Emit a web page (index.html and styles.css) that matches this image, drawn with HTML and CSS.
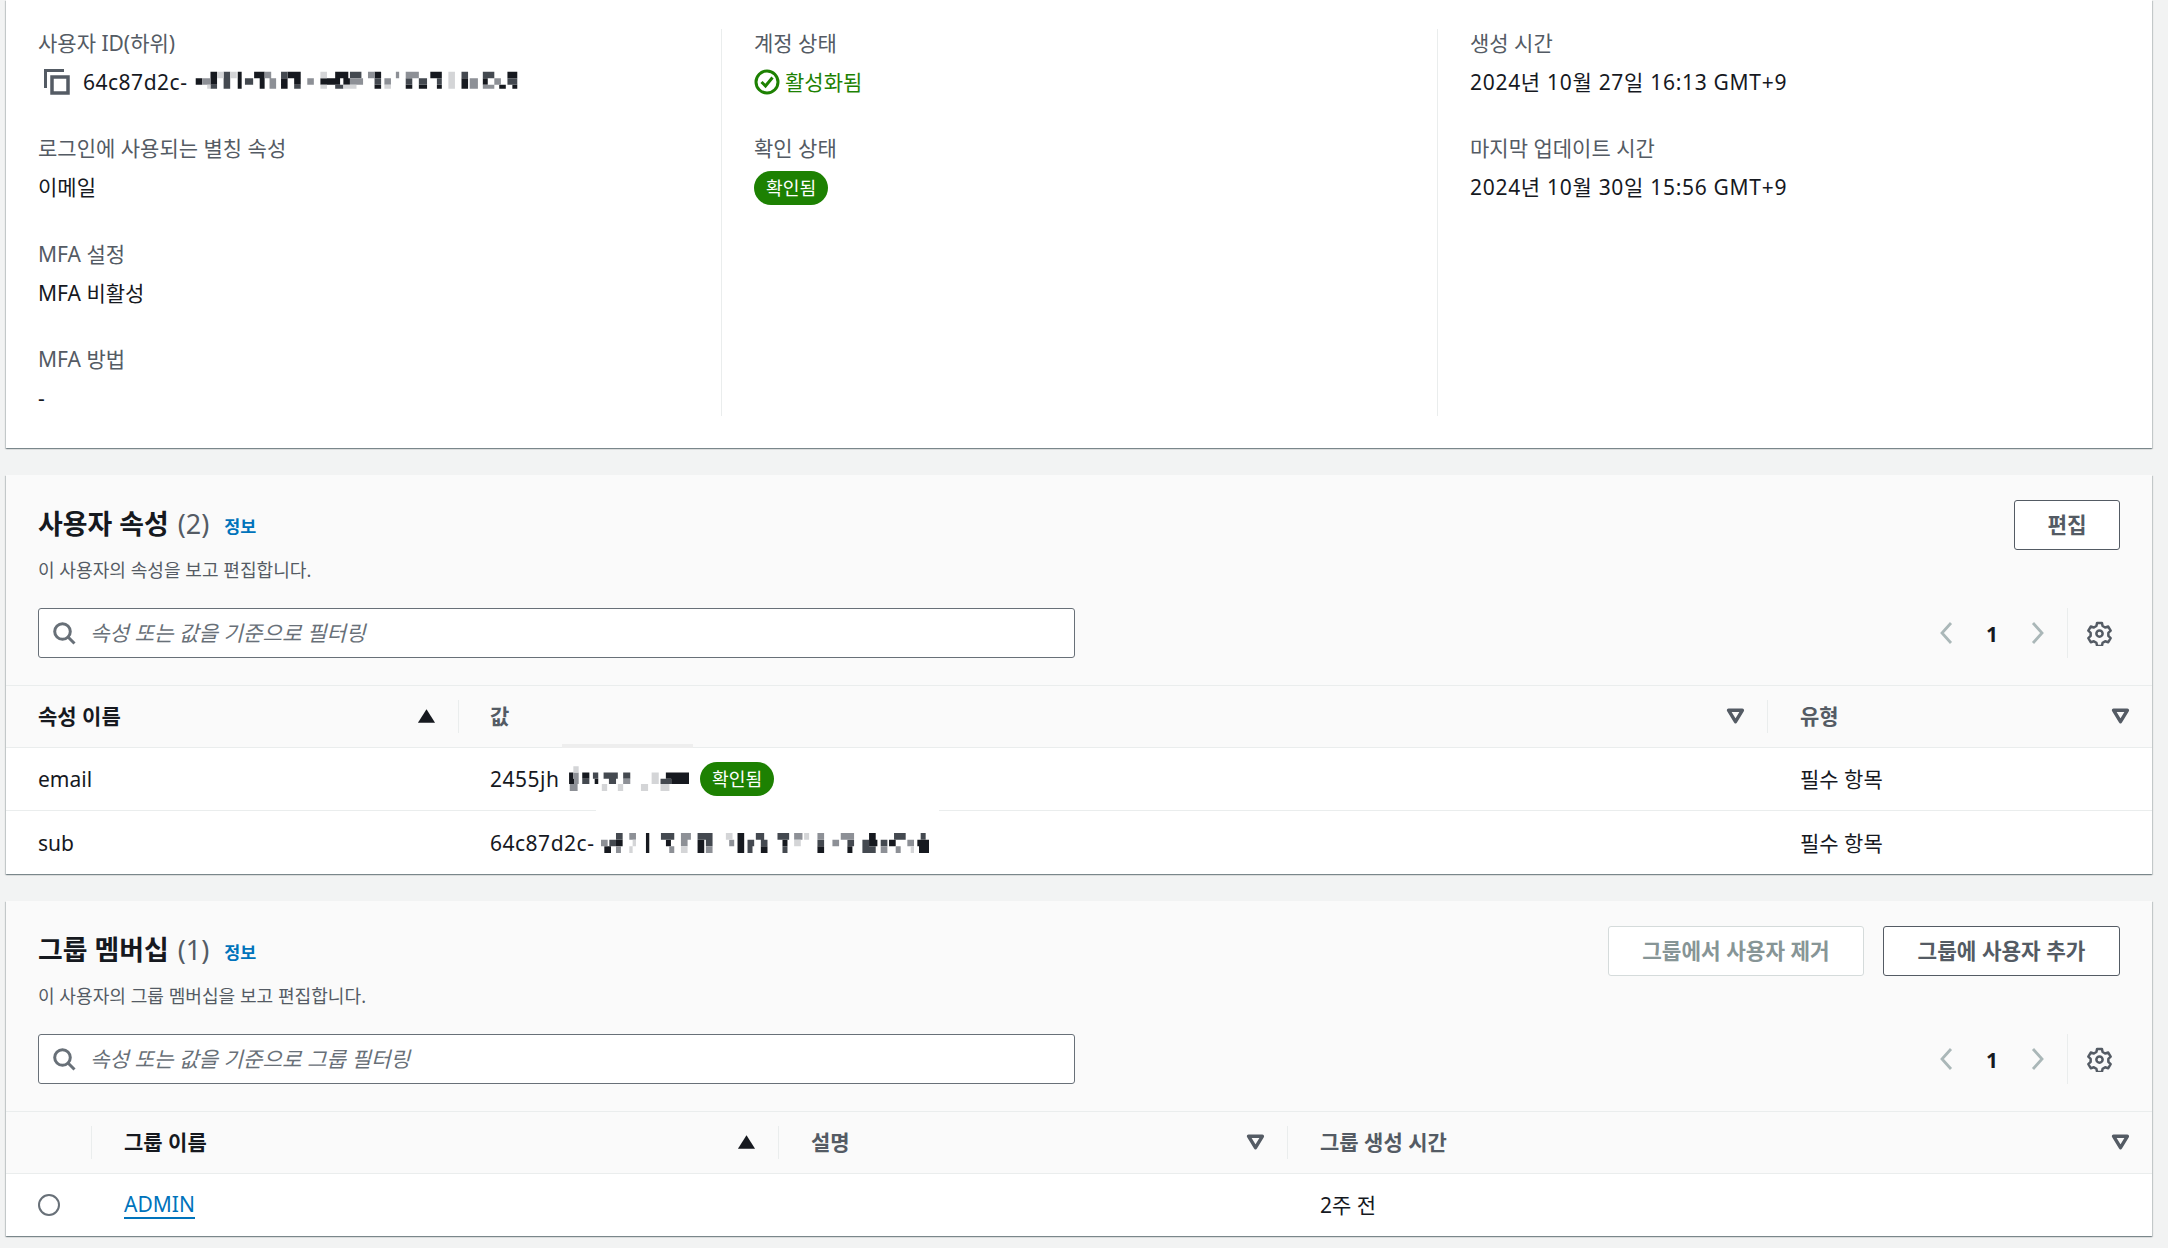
FILE: index.html
```html
<!DOCTYPE html>
<html lang="ko">
<head>
<meta charset="utf-8">
<title>사용자 세부 정보</title>
<link rel="stylesheet" href="styles.css">
</head>
<body>
<svg class="defs" aria-hidden="true">
  <symbol id="i-search" viewBox="0 0 24 24"><circle cx="10.500" cy="10.500" r="7.800" fill="none" stroke="currentColor" stroke-width="3"/><path d="M16 16l6.500 6.500" fill="none" stroke="currentColor" stroke-width="3"/></symbol>
  <symbol id="i-left" viewBox="0 0 24 24"><path d="M16 2L7 12l9 10" fill="none" stroke="currentColor" stroke-width="2.800"/></symbol>
  <symbol id="i-right" viewBox="0 0 24 24"><path d="M8 2l9 10-9 10" fill="none" stroke="currentColor" stroke-width="2.800"/></symbol>
  <symbol id="i-gear" viewBox="0 0 24 24"><path d="M9.700 1.800h4.600l.7 3 2.400 1.400 3-.9 2.300 4-2.200 2.100v2.900l2.200 2.100-2.300 4-3-.9-2.400 1.400-.7 3H9.700l-.7-3-2.400-1.400-3 .9-2.300-4 2.200-2.100v-2.900L1.300 9.300l2.300-4 3 .9L9 4.800z" fill="none" stroke="currentColor" stroke-width="2.400" stroke-linejoin="round"/><circle cx="12" cy="12" r="3" fill="none" stroke="currentColor" stroke-width="2.400"/></symbol>
  <symbol id="i-down" viewBox="0 0 16 14"><path d="M2 2h12L8 12z" fill="none" stroke="currentColor" stroke-width="3" stroke-linejoin="round"/></symbol>
  <symbol id="i-up" viewBox="0 0 16 14"><path d="M8 1l7.500 12H.5z" fill="currentColor"/></symbol>
</svg>

<main class="page">
  <section class="card details">
    <div class="col">
      <div class="pair"><div class="label">사용자 ID(하위)</div>
        <div class="value idline">
          <svg class="copy" viewBox="0 0 26 26"><path d="M1.500 19V1.500H20" fill="none" stroke="#545b64" stroke-width="3"/><rect x="8" y="8" width="16" height="16" fill="none" stroke="#545b64" stroke-width="3.500"/></svg>
          <span class="idtext">64c87d2c-</span>
          <svg class="mosaic m1" viewBox="30 10 1000 64">
            <path fill="#16191f" d="M85 18h20v20h-20zM168 18h12v20h-12zM218 18h32v20h-32zM320 18h40v20h-40zM465 18h40v20h-40zM585 18h20v20h-20zM755 18h35v20h-35zM990 18h30v20h-30zM40 38h20v20h-20zM85 38h20v20h-20zM168 38h12v20h-12zM235 38h15v20h-15zM300 38h20v20h-20zM340 38h20v20h-20zM420 38h60v20h-60zM490 38h20v20h-20zM850 38h20v20h-20zM915 38h15v20h-15zM168 58h12v12h-12zM235 58h15v12h-15zM300 58h20v12h-20zM585 58h20v12h-20zM680 58h20v12h-20zM720 58h25v12h-25zM775 58h15v12h-15zM850 58h20v12h-20zM965 58h20v12h-20zM1005 58h15v12h-15z"/>
            <path fill="#444950" d="M125 18h20v20h-20zM300 18h20v20h-20zM510 18h35v20h-35zM850 18h20v20h-20zM915 18h35v20h-35zM125 38h20v20h-20zM190 38h25v20h-25zM585 38h20v20h-20zM680 38h20v20h-20zM720 38h25v20h-25zM775 38h15v20h-15zM990 38h30v20h-30zM85 58h20v12h-20zM125 58h20v12h-20zM340 58h20v12h-20zM465 58h25v12h-25z"/>
            <path fill="#8d9096" d="M250 18h20v20h-20zM565 18h20v20h-20zM650 18h10v20h-10zM680 18h40v20h-40zM60 38h25v20h-25zM265 38h20v20h-20zM380 38h20v20h-20zM510 38h40v20h-40zM615 38h20v20h-20zM875 38h25v20h-25zM950 38h20v20h-20zM265 58h20v12h-20zM875 58h25v12h-25zM915 58h35v12h-35z"/>
            <path fill="#d4d5d7" d="M105 18h20v20h-20zM145 18h20v20h-20zM420 18h20v20h-20zM810 18h20v20h-20zM810 38h20v20h-20zM75 58h10v12h-10zM420 58h20v12h-20zM490 58h40v12h-40zM615 58h20v12h-20zM810 58h20v12h-20z"/>
          </svg>
        </div>
      </div>
      <div class="pair"><div class="label">로그인에 사용되는 별칭 속성</div><div class="value">이메일</div></div>
      <div class="pair"><div class="label">MFA 설정</div><div class="value">MFA 비활성</div></div>
      <div class="pair"><div class="label">MFA 방법</div><div class="value">-</div></div>
    </div>
    <div class="col ruled">
      <div class="pair"><div class="label">계정 상태</div>
        <div class="value status">
          <svg class="check" viewBox="0 0 26 26"><circle cx="13" cy="13" r="11" fill="none" stroke="#1d8102" stroke-width="3"/><path d="M7.500 13l4 4 7-8.500" fill="none" stroke="#1d8102" stroke-width="3"/></svg>
          <span>활성화됨</span>
        </div>
      </div>
      <div class="pair"><div class="label">확인 상태</div><div class="value"><span class="badge">확인됨</span></div></div>
    </div>
    <div class="col ruled last">
      <div class="pair"><div class="label">생성 시간</div><div class="value date">2024년 10월 27일 16:13 GMT+9</div></div>
      <div class="pair"><div class="label">마지막 업데이트 시간</div><div class="value date">2024년 10월 30일 15:56 GMT+9</div></div>
    </div>
  </section>

  <section class="card">
    <header class="head">
      <div class="head-top">
        <div class="titles"><h2>사용자 속성 <span class="count">(2)</span></h2><a class="info">정보</a></div>
        <div class="actions"><button class="btn">편집</button></div>
      </div>
      <p class="desc">이 사용자의 속성을 보고 편집합니다.</p>
      <div class="tools">
        <div class="search"><svg class="ic-search"><use href="#i-search"/></svg><span>속성 또는 값을 기준으로 필터링</span></div>
        <div class="pager">
          <svg class="ic-page"><use href="#i-left"/></svg><b>1</b><svg class="ic-page"><use href="#i-right"/></svg>
          <div class="gear-wrap"><svg class="ic-gear"><use href="#i-gear"/></svg></div>
        </div>
      </div>
    </header>
    <div class="table attrs">
      <div class="th active"><span>속성 이름</span><svg class="sort"><use href="#i-up"/></svg></div>
      <div class="th ruled-th"><span>값</span><svg class="sort"><use href="#i-down"/></svg></div>
      <div class="th ruled-th"><span>유형</span><svg class="sort"><use href="#i-down"/></svg></div>

      <div class="td">email</div>
      <div class="td val">
        <span class="mailtext">2455jh</span>
        <svg class="mosaic m2" viewBox="0 0 340 72">
          <path fill="#16191f" d="M3 18h12v17H3zM40 18h20v17H40zM275 18h65v17h-65zM3 35h14v15H3zM75 35h10v15H75zM290 35h50v15h-50z"/>
          <path fill="#444950" d="M70 18h15v17H70zM100 18h40v17h-40zM155 18h20v17h-20zM40 35h20v15H40zM260 35h30v15h-30zM115 35h20v15h-20z"/>
          <path fill="#8d9096" d="M15 18h15v17H15zM155 35h20v15h-20zM17 35h13v15H17zM5 50h22v20H5z"/>
          <path fill="#d4d5d7" d="M15 0h15v18H15zM235 18h20v32h-20zM95 50h15v20H95zM140 50h15v20h-15zM205 50h20v20h-20zM260 50h25v20h-25z"/>
        </svg>
        <span class="badge">확인됨</span>
      </div>
      <div class="td">필수 항목</div>

      <div class="td">sub</div>
      <div class="td val">
        <span class="idtext">64c87d2c-</span>
        <svg class="mosaic m3" viewBox="30 200 985 60">
          <path fill="#16191f" d="M165 200h10v20h-10zM440 200h20v20h-20zM835 200h20v20h-20zM75 220h20v20H75zM165 220h10v20h-10zM225 220h15v20h-15zM320 220h20v20h-20zM440 220h20v20h-20zM575 220h15v20h-15zM835 220h25v20h-25zM895 220h20v20h-20zM980 220h35v20h-35zM40 240h20v20H40zM165 240h10v20h-10zM320 240h20v20h-20zM440 240h20v20h-20zM510 240h20v20h-20zM680 240h20v20h-20zM770 240h15v20h-15zM985 240h30v20h-30z"/>
          <path fill="#444950" d="M75 200h20v20H75zM210 200h40v20h-40zM320 200h45v20h-45zM495 200h25v20h-25zM560 200h35v20h-35zM910 200h35v20h-35zM990 200h15v20h-15zM55 220h20v20H55zM345 220h20v20h-20zM470 220h20v20h-20zM510 220h20v20h-20zM680 220h20v20h-20zM770 220h20v20h-20zM815 220h20v20h-20zM870 220h20v20h-20zM470 240h15v20h-15zM575 240h15v20h-15zM815 240h40v20h-40z"/>
          <path fill="#8d9096" d="M115 200h20v20h-20zM270 200h30v20h-30zM610 200h25v20h-25zM680 200h20v20h-20zM750 200h40v20h-40zM30 220h20v20H30zM270 220h20v20h-20zM415 220h15v20h-15zM725 220h20v20h-20zM950 220h20v20h-20zM75 240h15v20H75zM235 240h15v20h-15zM345 240h20v20h-20zM870 240h20v20h-20zM915 240h15v20h-15z"/>
          <path fill="#d4d5d7" d="M405 200h20v20h-20zM640 200h15v20h-15zM125 220h10v20h-10zM610 220h20v20h-20zM115 240h10v20h-10zM270 240h20v20h-20zM960 240h10v20h-10z"/>
        </svg>
      </div>
      <div class="td">필수 항목</div>
      <i class="patch patch-a"></i>
      <i class="patch patch-b"></i>
    </div>
  </section>

  <section class="card">
    <header class="head">
      <div class="head-top">
        <div class="titles"><h2>그룹 멤버십 <span class="count">(1)</span></h2><a class="info">정보</a></div>
        <div class="actions"><button class="btn off">그룹에서 사용자 제거</button><button class="btn add">그룹에 사용자 추가</button></div>
      </div>
      <p class="desc">이 사용자의 그룹 멤버십을 보고 편집합니다.</p>
      <div class="tools">
        <div class="search"><svg class="ic-search"><use href="#i-search"/></svg><span>속성 또는 값을 기준으로 그룹 필터링</span></div>
        <div class="pager">
          <svg class="ic-page"><use href="#i-left"/></svg><b>1</b><svg class="ic-page"><use href="#i-right"/></svg>
          <div class="gear-wrap"><svg class="ic-gear"><use href="#i-gear"/></svg></div>
        </div>
      </div>
    </header>
    <div class="table groups">
      <div class="th"></div>
      <div class="th active ruled-th"><span>그룹 이름</span><svg class="sort"><use href="#i-up"/></svg></div>
      <div class="th ruled-th"><span>설명</span><svg class="sort"><use href="#i-down"/></svg></div>
      <div class="th ruled-th"><span>그룹 생성 시간</span><svg class="sort"><use href="#i-down"/></svg></div>

      <div class="td"><span class="radio"></span></div>
      <div class="td"><a class="link">ADMIN</a></div>
      <div class="td"></div>
      <div class="td">2주 전</div>
    </div>
  </section>
</main>
</body>
</html>
```

FILE: styles.css
```css
* { box-sizing: border-box; }
html, body { margin: 0; height: 100%; }
body {
  background: #f2f3f3;
  color: #16191f;
  font-family: "Noto Sans", "Noto Sans CJK KR", sans-serif;
  font-size: 21px;
  line-height: 28px;
  overflow: hidden;
}
.defs { display: none; }
.page { display: flex; flex-direction: column; gap: 27px; padding: 0 16px 0 6px; }
.card {
  background: #fff;
  box-shadow: 0 1px 1px 0 rgba(0,28,36,.3), 1px 1px 1px 0 rgba(0,28,36,.15), -1px 1px 1px 0 rgba(0,28,36,.15);
}

/* details */
.details { display: grid; grid-template-columns: 715px 716px 1fr; height: 448px; padding-top: 28.500px; }
.col { display: flex; flex-direction: column; gap: 38.500px; padding-left: 32px; height: 387px; }
.ruled { border-left: 1px solid #eaeded; }
.last { padding-left: 32px; }
.pair { display: flex; flex-direction: column; gap: 11px; }
.label { color: #545b64; height: 28px; }
.value { min-height: 28px; display: flex; align-items: center; }
.date { letter-spacing: .7px; }
.idline { padding-left: 6px; gap: 13px; }
.copy { width: 26px; height: 26px; flex: none; }
.mosaic { display: block; flex: none; }
.idtext { letter-spacing: .5px; }
.idline .idtext { width: 107px; flex: none; white-space: nowrap; }
.idline .mosaic { margin-left: -13px; margin-bottom: 4px; }
.m1 { width: 333px; height: 21px; }
.status { color: #1d8102; gap: 5px; }
.check { width: 26px; height: 26px; }
.badge {
  background: #1d8102; color: #fff;
  font-size: 18.200px; line-height: 34px; height: 34px;
  padding: 0 12px; border-radius: 17px; display: inline-block;
}
.details .badge { margin: -2px 0 -4px; }

/* header */
.head { background: #fafafa; padding: 25px 32px 0 32px; height: 211px; border-bottom: 1px solid #eaeded; display: flex; flex-direction: column; }
.head-top { display: flex; justify-content: space-between; align-items: flex-start; height: 50px; }
.titles { display: flex; align-items: center; gap: 15px; height: 48px; }
h2 { margin: 0; font-size: 26.900px; line-height: 34px; font-weight: 700; }
.count { font-weight: 400; color: #545b64; margin-left: 2px; }
.info { color: #0073bb; font-size: 17.400px; font-weight: 700; margin-top: 3px; }
.actions { display: flex; gap: 19px; }
.btn {
  font: inherit; font-size: 21.300px; font-weight: 700; color: #545b64;
  background: #fff; border: 1.500px solid #545b64; border-radius: 3px;
  height: 50px; min-width: 106px; padding: 0 31px;
}
.btn.off { color: #879596; border-color: #d5dbdb; width: 256px; padding: 0; }
.btn.add { width: 237px; padding: 0; }
.desc { margin: 6px 0 0; color: #545b64; font-size: 18.100px; line-height: 28px; }
.tools { display: flex; justify-content: space-between; align-items: center; margin-top: 24px; height: 50px; }
.search {
  width: 1037px; height: 50px; background: #fff;
  border: 1.500px solid #687078; border-radius: 3px;
  display: flex; align-items: center; gap: 14px; padding-left: 13px;
  color: #687078; font-style: italic; font-size: 21.200px;
}
.ic-search { width: 24px; height: 24px; color: #687078; flex: none; }
.pager { display: flex; align-items: center; height: 50px; }
.ic-page { width: 24px; height: 24px; color: #aab7b8; flex: none; }
.pager b { width: 66px; text-align: center; padding-top: 2px; }
.gear-wrap { margin-left: 18px; border-left: 1px solid #eaeded; height: 50px; padding: 0 8px 0 19px; display: flex; align-items: center; }
.ic-gear { width: 25px; height: 25px; color: #545b64; display: block; }

/* tables */
.table { display: grid; position: relative; }
.attrs { grid-template-columns: 452px 1309px 1fr; }
.groups { grid-template-columns: 85px 687px 509px 1fr; }
.th, .td { display: flex; align-items: center; }
.th {
  height: 62px; background: #fafafa; border-bottom: 1.500px solid #eaeded;
  padding: 0 22px 2px 32px; justify-content: space-between;
  color: #545b64; font-weight: 700; position: relative;
}
.th.active { color: #16191f; }
.ruled-th::before {
  content: ""; position: absolute; left: 0; top: 14px; bottom: 14px; width: 1px; background: #eaeded;
}
.sort { width: 19px; height: 16px; color: #545b64; flex: none; }
.active .sort { color: #16191f; }
.td { height: 62px; padding-left: 32px; }
.attrs .td { height: 63px; border-bottom: 1.500px solid #eaeded; }
.attrs .td:nth-child(n+7) { border-bottom: 0; }
.attrs .th:nth-child(3), .attrs .td:nth-child(3n), .groups .ruled-th, .groups .td:nth-child(n+6) { padding-left: 33px; }
.val .idtext { width: 111px; flex: none; white-space: nowrap; }
.mailtext { width: 78px; flex: none; letter-spacing: .5px; white-space: nowrap; }
.m2 { width: 121px; height: 26px; }
.val .badge { margin-left: 11px; }
.m3 { width: 328px; height: 20px; }
.radio { width: 22px; height: 22px; border: 2px solid #687078; border-radius: 50%; }
.link { color: #0073bb; border-bottom: 2px solid #0073bb; line-height: 26px; }
.patch { position: absolute; display: block; }
.patch-a { left: 556px; top: 58px; width: 131px; height: 4px; background: #eeeeee; }
.patch-b { left: 590px; top: 123px; width: 343px; height: 2px; background: #fff; }
```
